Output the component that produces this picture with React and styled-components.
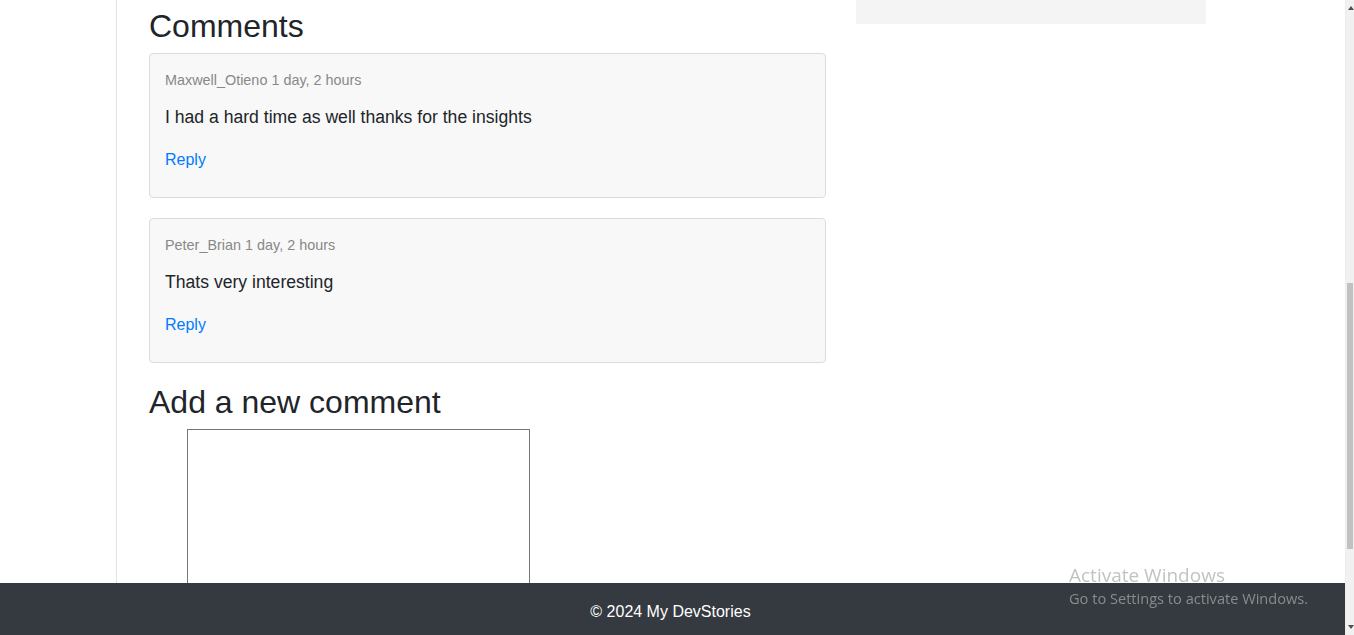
import React from "react";
import styled, { createGlobalStyle } from "styled-components";

const Global = createGlobalStyle`
  html, body { margin: 0; padding: 0; height: 100%; overflow: hidden; background: #fff; }
  body { font-family: "Liberation Sans", Arial, sans-serif; color: #212529; }
  * { box-sizing: border-box; }
`;

const Window = styled.div`
  display: flex;
  width: 100vw;
  height: 100vh;
  overflow: hidden;
`;

const Viewport = styled.div`
  position: relative;
  flex: 1;
  height: 100%;
  overflow: hidden;
`;

const Layout = styled.div`
  display: flex;
  gap: 30px;
  margin-left: 116px;
  align-items: flex-start;
`;

const Main = styled.main`
  width: 710px;
  min-height: 635px;
  border-left: 1px solid #dee2e6;
  padding: 7px 0 0 32px;
`;

const Sidebar = styled.aside`
  width: 350px;
  height: 24px;
  background: #f4f4f4;
`;

const Heading = styled.h2`
  font-size: 32px;
  font-weight: 400;
  line-height: 1.2;
  margin: 0 0 8px;
  color: #212529;
`;

const Card = styled.div`
  background: #f8f8f8;
  border: 1px solid #dcdcdc;
  border-radius: 4px;
  padding: 16px 15px 25px;
  margin-bottom: 20px;
`;

const Meta = styled.p`
  margin: 0 0 13px;
  font-size: 14.4px;
  line-height: 21px;
  color: #888;
`;

const Body = styled.p`
  margin: 0 0 18px;
  font-size: 17.6px;
  line-height: 26px;
  color: #212529;
`;

const ReplyLink = styled.a`
  display: block;
  font-size: 16px;
  line-height: 24px;
  color: #007bff;
  text-decoration: none;
`;

const Form = styled.form`
  margin-top: -1px;
  padding-left: 38px;
`;

const TextArea = styled.textarea`
  display: block;
  width: 343px;
  height: 220px;
  border: 1px solid #767676;
  border-radius: 0;
  resize: none;
  font-family: inherit;
  background: #fff;
`;

const Footer = styled.footer`
  position: fixed;
  left: 0;
  bottom: 0;
  width: calc(100vw - 9px);
  height: 52px;
  padding: 5px 4px 0 0;
  background: #343a40;
  color: #fff;
  font-size: 16px;
  display: flex;
  align-items: center;
  justify-content: center;
`;

const Watermark = styled.div`
  position: fixed;
  left: 1069px;
  top: 562px;
  font-family: "Open Sans", "Noto Sans", sans-serif;
  color: rgba(170, 170, 170, 0.72);
  pointer-events: none;
`;

const WmTitle = styled.div`
  font-size: 19px;
  line-height: 26px;
`;

const WmSub = styled.div`
  font-size: 14.6px;
  line-height: 20px;
`;

const ScrollTrack = styled.div`
  position: relative;
  width: 9px;
  height: 100%;
  background: #f1f1f1;
  border-left: 1px solid #ececec;
`;

const Thumb = styled.div`
  position: absolute;
  left: 1px;
  top: 283px;
  width: 6px;
  height: 266px;
  background: #c1c1c1;
`;

const Arrow = styled.div`
  position: absolute;
  left: 2px;
  width: 0;
  height: 0;
  border-left: 3px solid transparent;
  border-right: 3px solid transparent;
  ${(p) =>
    p.$down
      ? "bottom: 6px; border-top: 4px solid #505050;"
      : "top: 6px; border-bottom: 4px solid #505050;"}
`;

const comments = [
  { user: "Maxwell_Otieno", time: "1 day, 2 hours", text: "I had a hard time as well thanks for the insights" },
  { user: "Peter_Brian", time: "1 day, 2 hours", text: "Thats very interesting" },
];

export default function App() {
  return (
    <>
      <Global />
      <Window>
        <Viewport>
          <Layout>
            <Main>
              <Heading>Comments</Heading>
              {comments.map((c) => (
                <Card key={c.user}>
                  <Meta>
                    {c.user} {c.time}
                  </Meta>
                  <Body>{c.text}</Body>
                  <ReplyLink href="#">Reply</ReplyLink>
                </Card>
              ))}
              <Heading>Add a new comment</Heading>
              <Form>
                <TextArea />
              </Form>
            </Main>
            <Sidebar />
          </Layout>
          <Footer>© 2024 My DevStories</Footer>
          <Watermark>
            <WmTitle>Activate Windows</WmTitle>
            <WmSub>Go to Settings to activate Windows.</WmSub>
          </Watermark>
        </Viewport>
        <ScrollTrack>
          <Arrow />
          <Thumb />
          <Arrow $down />
        </ScrollTrack>
      </Window>
    </>
  );
}
